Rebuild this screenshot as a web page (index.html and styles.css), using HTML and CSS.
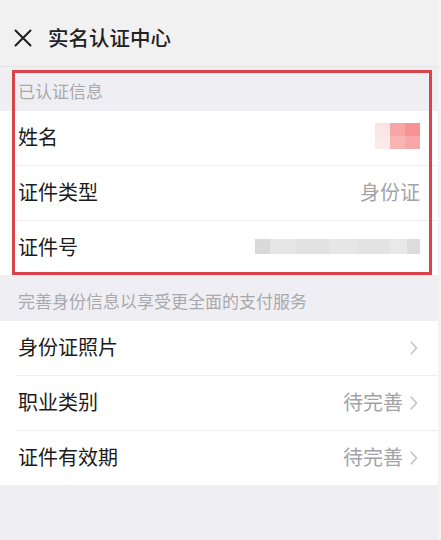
FILE: index.html
```html
<!DOCTYPE html>
<html lang="zh-CN">
<head>
<meta charset="utf-8">
<title>实名认证中心</title>
<link rel="stylesheet" href="styles.css">
</head>
<body>
<div class="page">
  <header class="header">
    <svg class="close" width="18" height="18" viewBox="0 0 18 18"><path d="M1.5 1.5 L16.5 16.5 M16.5 1.5 L1.5 16.5" stroke="#1f1f1f" stroke-width="2" fill="none" stroke-linecap="round"/></svg>
    <h1 class="title">实名认证中心</h1>
  </header>

  <div class="section-title first">已认证信息</div>
  <div class="group">
    <div class="row"><span class="label">姓名</span><span class="mosaic"><i class="m1"></i><i class="m2"></i><i class="m3"></i></span></div>
    <div class="row"><span class="label">证件类型</span><span class="value">身份证</span></div>
    <div class="row"><span class="label">证件号</span><span class="idbar"></span></div>
  </div>

  <div class="section-title second">完善身份信息以享受更全面的支付服务</div>
  <div class="group">
    <div class="row link"><span class="label">身份证照片</span><span class="right"><svg class="chev" width="8" height="14" viewBox="0 0 8 14"><path d="M1.2 1.2 L6.6 7 L1.2 12.8" stroke="#c3c3c6" stroke-width="1.6" fill="none" stroke-linecap="round" stroke-linejoin="round"/></svg></span></div>
    <div class="row link"><span class="label">职业类别</span><span class="right"><span class="value">待完善</span><svg class="chev" width="8" height="14" viewBox="0 0 8 14"><path d="M1.2 1.2 L6.6 7 L1.2 12.8" stroke="#c3c3c6" stroke-width="1.6" fill="none" stroke-linecap="round" stroke-linejoin="round"/></svg></span></div>
    <div class="row link"><span class="label">证件有效期</span><span class="right"><span class="value">待完善</span><svg class="chev" width="8" height="14" viewBox="0 0 8 14"><path d="M1.2 1.2 L6.6 7 L1.2 12.8" stroke="#c3c3c6" stroke-width="1.6" fill="none" stroke-linecap="round" stroke-linejoin="round"/></svg></span></div>
  </div>

  <div class="highlight"></div>
</div>
</body>
</html>
```

FILE: styles.css
```css
* { box-sizing: border-box; }
html, body {
  margin: 0;
  padding: 0;
  background: #f3f3f5;
  font-family: "Noto Sans CJK SC", "Noto Sans", sans-serif;
}
.page {
  position: relative;
  width: 438px;
  height: 540px;
  background: #efeff3;
}
.header {
  height: 67px;
  padding: 7px 0 0 14px;
  display: flex;
  align-items: center;
  background: #f1f1f2;
  border-bottom: 1px solid #e6e6e8;
}
.close { display: block; flex: none; margin-top: 3px; }
.title {
  margin: 0 0 0 16px;
  font-size: 20.5px;
  font-weight: 500;
  color: #222;
  letter-spacing: 0;
}
.section-title {
  padding-left: 18px;
  display: flex;
  align-items: center;
  font-size: 17px;
  color: #a9a9ad;
}
.section-title.first { height: 44px; padding-top: 2px; }
.section-title.second { height: 46px; padding-top: 5px; }
.group { background: #fff; }
.row {
  height: 55px;
  margin-left: 16px;
  padding: 0 18px 4px 2px;
  display: flex;
  align-items: center;
  justify-content: space-between;
  border-bottom: 1px solid #ededef;
}
.row:last-child { border-bottom: none; height: 54px; }
.row.link { padding-right: 20px; }
.label {
  font-size: 20px;
  color: #1b1b1b;
}
.value {
  font-size: 20px;
  color: #a3a3a6;
}
.right {
  display: flex;
  align-items: center;
  gap: 7px;
}
.chev { display: block; margin-top: 3px; }
.mosaic {
  display: grid;
  grid-template-columns: repeat(3, 15px);
  height: 26px;
}
.mosaic i { display: block; }
.m1 { background: linear-gradient(#fbe2e2, #fcebeb); }
.m2 { background: linear-gradient(#f7a6a6 50%, #f9b4b4 50%); }
.m3 { background: linear-gradient(#f79393 50%, #f8a6a6 50%); }
.idbar {
  width: 165px;
  height: 15px;
  background: linear-gradient(90deg,
    #d9d9d9 0, #d9d9d9 9%,
    #e6e6e6 9%, #e6e6e6 25%,
    #e1e1e1 25%, #e1e1e1 45%,
    #e7e7e7 45%, #e7e7e7 62%,
    #e3e3e3 62%, #e3e3e3 82%,
    #e9e9e9 82%, #e9e9e9 92%,
    #dcdcdc 92%, #dcdcdc 100%);
}
.highlight {
  position: absolute;
  left: 12px;
  top: 70px;
  width: 420px;
  height: 205px;
  border: 3px solid #d9434b;
  pointer-events: none;
}
```
